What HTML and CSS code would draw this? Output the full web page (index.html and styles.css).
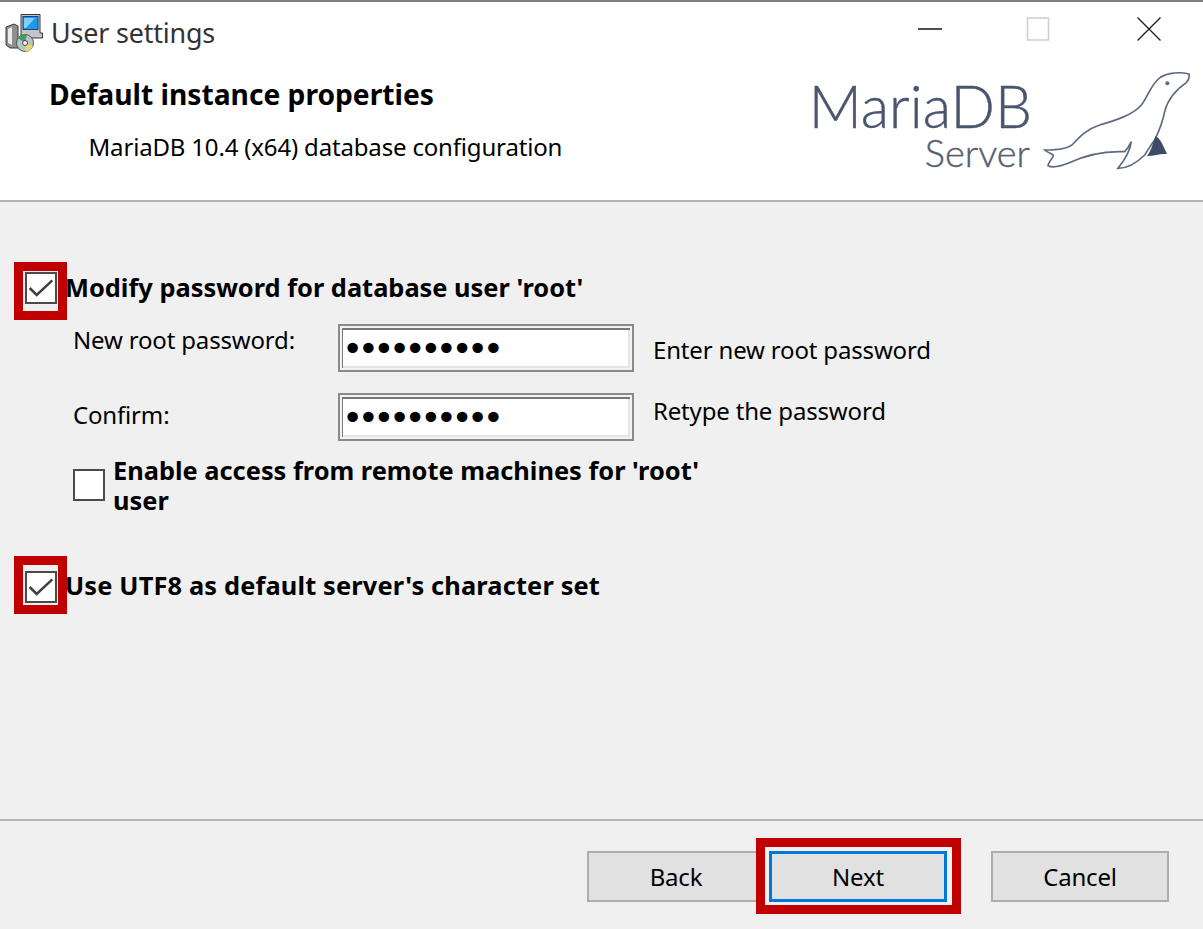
FILE: index.html
```html
<!DOCTYPE html>
<html lang="en">
<head>
<meta charset="utf-8">
<title>User settings</title>
<link rel="stylesheet" href="styles.css">
</head>
<body>
<main class="window">
  <header class="header">
    <div class="header-main">
      <div class="titlebar">
        <svg class="app-icon" viewBox="0 0 38 38" aria-hidden="true">
          <path d="M1 13 L9 10 L13 12 L13 34 L5 34 L1 31 Z" fill="#8f8f8f" stroke="#3c3c3c"/>
          <path d="M3 15 L7 13 L7 31 L3 29 Z" fill="#ececec"/>
          <path d="M16 .5 H35 V19 H37.5 V24 H16 Z" fill="#c4c4c4" stroke="#36363e"/>
          <rect x="18" y="2.5" width="15" height="13" fill="#1b9ce8" stroke="#1b3f8a"/>
          <path d="M19 4 H30 L21 14 H19 Z" fill="#7fd0f5"/>
          <circle cx="20" cy="29" r="8.5" fill="#b9c4c6" stroke="#4a5a50"/>
          <path d="M20 29 L13 24 A8.5 8.5 0 0 1 22 20.5 Z" fill="#3f9f63"/>
          <path d="M20 29 L28 32 A8.5 8.5 0 0 1 20 37.5 Z" fill="#e8d56a"/>
          <circle cx="20" cy="29" r="2.5" fill="#f5f5f5" stroke="#444"/>
        </svg>
        <span class="title">User settings</span>
      </div>
      <h1 class="heading">Default instance properties</h1>
      <p class="subheading">MariaDB 10.4 (x64) database configuration</p>
    </div>
    <div class="header-side">
      <div class="controls">
        <svg class="ctl" viewBox="0 0 26 26" aria-hidden="true"><path d="M4 13 H28" stroke="#222" stroke-width="1.6"/></svg>
        <svg class="ctl" viewBox="0 0 26 26" aria-hidden="true"><rect x="2.5" y="2" width="21" height="22" fill="#fff" stroke="#d0d0d0" stroke-width="1.6"/></svg>
        <svg class="ctl" viewBox="0 0 26 26" aria-hidden="true"><path d="M1.5 1.5 L24.5 24.5 M24.5 1.5 L1.5 24.5" stroke="#222" stroke-width="1.4"/></svg>
      </div>
      <div class="logo">
        <div class="logo-words">
          <span class="logo-name">MariaDB</span>
          <span class="logo-sub">Server</span>
        </div>
        <svg class="seal" viewBox="760 210 450 300" aria-hidden="true">
          <path d="M1198 222 C1170 215 1135 218 1112 232 C1085 250 1075 290 1055 315 C1030 345 975 362 930 375 C890 388 870 410 850 432 C835 448 800 450 765 450 C775 460 795 462 790 470 C785 480 775 488 775 497 C790 505 810 500 835 490 C880 468 930 452 1005 455 C1015 445 1020 435 1025 425 C1022 450 1005 480 985 505 C1010 505 1040 490 1065 465 C1075 450 1080 440 1095 420 C1105 400 1118 370 1125 335 C1135 295 1165 265 1190 248 C1198 240 1200 232 1198 222 Z" fill="#fff" stroke="#5d6a82" stroke-width="5"/>
          <path d="M1098 408 C1112 415 1122 440 1132 462 C1112 460 1095 468 1072 468 C1085 452 1090 428 1098 408 Z" fill="#3f4b66"/>
          <circle cx="1133" cy="250" r="6" fill="#5d6a82"/>
        </svg>
      </div>
    </div>
  </header>

  <section class="content">
    <div class="check-row check-row-first">
      <span class="box-slot">
        <span class="checkbox"><svg viewBox="0 0 26 26" aria-hidden="true"><path d="M2.5 13 L9 19.5 L23.5 6" fill="none" stroke="#404040" stroke-width="2.3"/></svg></span>
        <span class="mark mark-first"></span>
      </span>
      <span class="check-label">Modify password for database user 'root'</span>
    </div>

    <div class="field field-new">
      <label class="field-label">New root password:</label>
      <div class="input"><span class="dots">••••••••••</span></div>
      <span class="hint">Enter new root password</span>
    </div>
    <div class="field field-confirm">
      <label class="field-label">Confirm:</label>
      <div class="input"><span class="dots">••••••••••</span></div>
      <span class="hint">Retype the password</span>
    </div>

    <div class="remote-row">
      <span class="checkbox"></span>
      <span class="check-label remote-label">Enable access from remote machines for 'root' user</span>
    </div>

    <div class="check-row check-row-second">
      <span class="box-slot">
        <span class="checkbox"><svg viewBox="0 0 26 26" aria-hidden="true"><path d="M2.5 13 L9 19.5 L23.5 6" fill="none" stroke="#404040" stroke-width="2.3"/></svg></span>
        <span class="mark mark-second"></span>
      </span>
      <span class="check-label">Use UTF8 as default server's character set</span>
    </div>
  </section>

  <footer class="footer">
    <button class="btn" type="button">Back</button>
    <span class="btn-slot">
      <button class="btn btn-primary" type="button">Next</button>
      <span class="mark mark-next"></span>
    </span>
    <button class="btn btn-cancel" type="button">Cancel</button>
  </footer>
</main>
</body>
</html>
```
FILE: styles.css
```css
* { box-sizing: border-box; }
html, body { margin: 0; padding: 0; }
body {
  width: 1203px;
  height: 929px;
  overflow: hidden;
  background: #f0f0f0;
  color: #000;
  font-family: "Noto Sans", "Open Sans", sans-serif;
  font-size: 24px;
  letter-spacing: -0.17px;
}
.window { display: flex; flex-direction: column; height: 929px; }

.header {
  display: flex;
  justify-content: space-between;
  height: 202px;
  background: #fff;
  border-top: 2px solid #7f7f7f;
  border-bottom: 2px solid #b4b4b4;
}
.header-main { display: flex; flex-direction: column; }
.titlebar { display: flex; align-items: center; height: 73px; padding: 0 0 12px 5px; }
.app-icon { width: 38px; height: 38px; }
.title { margin-left: 8px; color: #333; font-size: 26.9px; }
.heading { margin: 0 0 0 49px; font-size: 28.2px; letter-spacing: 0; font-weight: 700; line-height: 38px; }
.subheading { margin: 16px 0 0 88.5px; line-height: 36px; }

.header-side { display: flex; flex-direction: column; align-items: flex-end; width: 420px; }
.controls { display: flex; gap: 85px; padding: 14px 41px 0 0; }
.ctl { width: 26px; height: 26px; overflow: visible; }
.logo { display: flex; align-items: flex-start; margin: 28px 10px 0 0; }
.logo-words { display: flex; flex-direction: column; align-items: flex-end; color: #4a556e; font-family: Lato, "Noto Sans", sans-serif; font-weight: 300; letter-spacing: 0; margin-top: 12px; -webkit-text-stroke: 0.4px currentColor; }
.logo-name { font-size: 58.5px; line-height: 46px; }
.logo-sub { font-size: 38px; line-height: 40px; margin-top: 4px; margin-right: 2px; color: #565f72; }
.seal { width: 150px; height: 100px; margin-left: 11px; }

.content { flex: 1; display: flex; flex-direction: column; padding-left: 25px; border-bottom: 2px solid #b4b4b4; }
.check-row { display: flex; align-items: center; }
.check-row-first { margin-top: 70px; }
.check-row-second { margin-top: 55px; }
.box-slot { position: relative; display: block; width: 40px; height: 32px; flex: none; }
.checkbox {
  display: block;
  flex: none;
  width: 32px;
  height: 32px;
  background: #fff;
  border: 2px solid #4a4a4a;
}
.checkbox svg { display: block; width: 28px; height: 28px; }
.check-label { font-weight: 700; font-size: 25.4px; letter-spacing: 0; line-height: 30px; }
.check-row-first .check-label { padding-bottom: 2px; }
.check-row-second .check-label { padding-bottom: 4px; letter-spacing: 0.15px; }

.mark { position: absolute; border: 9px solid #c00000; pointer-events: none; }
.mark-first { left: -11px; top: -10px; width: 53px; height: 58px; }
.mark-second { left: -11px; top: -15px; width: 53px; height: 58px; }
.mark-next { left: -13px; top: -13px; width: 205px; height: 76px; }

.field { display: grid; grid-template-columns: 246px 296px auto; column-gap: 19px; margin-left: 48px; }
.field-new { margin-top: 20px; }
.field-confirm { margin-top: 21px; }
.field-label { line-height: 34px; }
.field-new .field-label { margin-top: -1px; }
.field-confirm .field-label { margin-top: 5px; }
.hint { line-height: 34px; }
.field-new .hint { margin-top: 9px; }
.field-confirm .hint { margin-top: 1px; }

.input {
  height: 48px;
  padding-left: 5px;
  background: #fff;
  border: 2px solid #8a8a8a;
  box-shadow: inset 0 0 0 2px #f2f2f2, inset 3px 4px 0 0 #777, inset -4px -4px 0 0 #e4e4e4;
  display: flex;
  align-items: center;
}
.dots { font-family: "DejaVu Sans", sans-serif; font-size: 36px; letter-spacing: -5.6px; line-height: 1; margin-left: -3px; padding-top: 1px; }

.remote-row { display: flex; align-items: flex-start; margin: 14px 0 0 48px; width: 640px; }
.remote-row .checkbox { margin-top: 14px; margin-right: 8px; }
.remote-label { width: 600px; }

.footer { display: flex; align-items: flex-start; height: 108px; padding: 30px 0 0 587px; }
.btn-slot { position: relative; display: block; margin-left: 4px; }
.btn {
  display: block;
  width: 178px;
  height: 51px;
  padding: 0;
  background: #e1e1e1;
  border: 2px solid #adadad;
  color: #000;
  font: inherit;
  letter-spacing: inherit;
}
.btn-primary { border: 3px solid #0078d7; box-shadow: inset 0 0 0 1px #e1e1e1; }
.btn-cancel { margin-left: 44px; }
```
